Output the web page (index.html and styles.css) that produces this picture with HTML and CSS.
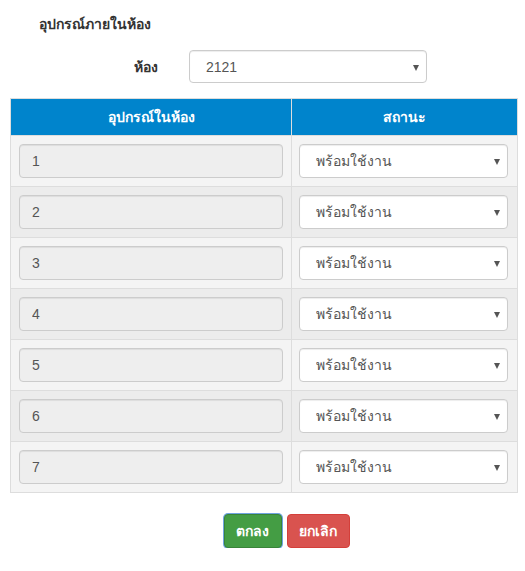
FILE: index.html
```html
<!DOCTYPE html>
<html lang="th">
<head>
<meta charset="utf-8">
<title>อุปกรณ์ภายในห้อง</title>
<link rel="stylesheet" href="styles.css">
</head>
<body>
<div class="page">
  <h4 class="title">อุปกรณ์ภายในห้อง</h4>
  <div class="room-row">
    <label class="room-label">ห้อง</label>
    <div class="select-wrap room-select">
      <select class="ctl"><option>2121</option></select>
    </div>
  </div>
  <table class="grid">
    <thead>
      <tr><th class="col-a">อุปกรณ์ในห้อง</th><th>สถานะ</th></tr>
    </thead>
    <tbody>
      <tr><td><input class="ctl ro" value="1" disabled></td><td><div class="select-wrap"><select class="ctl"><option>พร้อมใช้งาน</option></select></div></td></tr>
      <tr><td><input class="ctl ro" value="2" disabled></td><td><div class="select-wrap"><select class="ctl"><option>พร้อมใช้งาน</option></select></div></td></tr>
      <tr><td><input class="ctl ro" value="3" disabled></td><td><div class="select-wrap"><select class="ctl"><option>พร้อมใช้งาน</option></select></div></td></tr>
      <tr><td><input class="ctl ro" value="4" disabled></td><td><div class="select-wrap"><select class="ctl"><option>พร้อมใช้งาน</option></select></div></td></tr>
      <tr><td><input class="ctl ro" value="5" disabled></td><td><div class="select-wrap"><select class="ctl"><option>พร้อมใช้งาน</option></select></div></td></tr>
      <tr><td><input class="ctl ro" value="6" disabled></td><td><div class="select-wrap"><select class="ctl"><option>พร้อมใช้งาน</option></select></div></td></tr>
      <tr><td><input class="ctl ro" value="7" disabled></td><td><div class="select-wrap"><select class="ctl"><option>พร้อมใช้งาน</option></select></div></td></tr>
    </tbody>
  </table>
  <div class="actions">
    <button class="btn btn-ok">ตกลง</button>
    <button class="btn btn-cancel">ยกเลิก</button>
  </div>
</div>
</body>
</html>
```

FILE: styles.css
```css
* { box-sizing: border-box; }
html, body { margin: 0; padding: 0; background: #fff; }
body {
  font-family: Tahoma, "Liberation Sans", "Noto Sans", sans-serif;
  font-size: 14px;
  color: #333;
}
.page { padding: 0 7px 0 10px; }
.title {
  margin: 0;
  padding: 14px 0 0 29px;
  font-size: 14px;
  font-weight: bold;
  line-height: 20px;
}
.room-row {
  display: flex;
  align-items: center;
  margin-top: 16px;
  height: 33px;
}
.room-label {
  width: 149px;
  text-align: right;
  font-weight: bold;
  padding-right: 1px;
}
.room-select { width: 238px; margin-left: 30px; }
.select-wrap { position: relative; }
.select-wrap::after {
  content: "";
  position: absolute;
  right: 8px;
  top: 50%;
  margin-top: -2px;
  border-left: 3.5px solid transparent;
  border-right: 3.5px solid transparent;
  border-top: 6px solid #555;
  pointer-events: none;
}
.ctl {
  display: block;
  width: 100%;
  height: 34px;
  border: 1px solid #ccc;
  border-radius: 4px;
  background: #fff;
  color: #555;
  font-family: inherit;
  font-size: 14px;
  padding: 6px 12px 6px 16px;
  -webkit-appearance: none;
  appearance: none;
  box-shadow: inset 0 1px 1px rgba(0,0,0,0.075);
}
.room-select .ctl { height: 33px; }
.ctl.ro { background: #eee; padding-left: 12px; color: #555; opacity: 1; -webkit-text-fill-color: #555; }
.grid {
  width: 508px;
  margin-top: 15px;
  border-collapse: collapse;
  border: 1px solid #ddd;
}
.grid th {
  background: #0084cc;
  color: #fff;
  font-weight: bold;
  height: 37px;
  padding: 8px;
  text-align: center;
  border: 1px solid #ddd;
  line-height: 20px;
}
.grid th.col-a { width: 281px; }
.grid td {
  padding: 8px;
  border: 1px solid #ddd;
  height: 51px;
}
.grid td + td { padding-left: 7px; padding-right: 9px; }
.grid tbody tr:nth-child(odd) td { background: #f4f4f4; }
.grid tbody tr:nth-child(even) td { background: #ececec; }
.actions {
  display: flex;
  justify-content: center;
  gap: 5px;
  margin-top: 21px;
  padding-left: 45px;
}
.btn {
  font-family: inherit;
  font-size: 14px;
  font-weight: bold;
  color: #fff;
  height: 34px;
  border-radius: 4px;
  padding: 0 10px;
  cursor: pointer;
}
.btn-ok {
  width: 58px;
  background: #449d44;
  border: 1px solid #398439;
  box-shadow: 0 0 0 1px #6fa3e0;
}
.btn-cancel {
  width: 63px;
  background: #d9534f;
  border: 1px solid #d43f3a;
}
```
